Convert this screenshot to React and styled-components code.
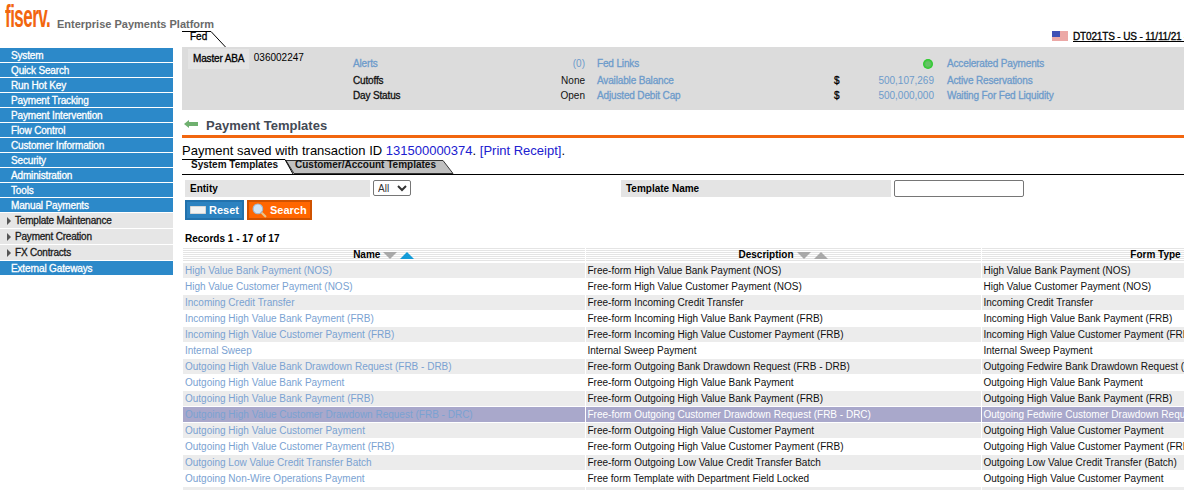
import * as React from 'react';
import styled, { createGlobalStyle } from 'styled-components';

const NAV_TOP = ['System', 'Quick Search', 'Run Hot Key', 'Payment Tracking', 'Payment Intervention', 'Flow Control', 'Customer Information', 'Security', 'Administration', 'Tools', 'Manual Payments'];
const NAV_SUB = ['Template Maintenance', 'Payment Creation', 'FX Contracts'];

const ROWS = [
  ['High Value Bank Payment (NOS)', 'Free-form High Value Bank Payment (NOS)', 'High Value Bank Payment (NOS)'],
  ['High Value Customer Payment (NOS)', 'Free-form High Value Customer Payment (NOS)', 'High Value Customer Payment (NOS)'],
  ['Incoming Credit Transfer', 'Free-form Incoming Credit Transfer', 'Incoming Credit Transfer'],
  ['Incoming High Value Bank Payment (FRB)', 'Free-form Incoming High Value Bank Payment (FRB)', 'Incoming High Value Bank Payment (FRB)'],
  ['Incoming High Value Customer Payment (FRB)', 'Free-form Incoming High Value Customer Payment (FRB)', 'Incoming High Value Customer Payment (FRB)'],
  ['Internal Sweep', 'Internal Sweep Payment', 'Internal Sweep Payment'],
  ['Outgoing High Value Bank Drawdown Request (FRB - DRB)', 'Free-form Outgoing Bank Drawdown Request (FRB - DRB)', 'Outgoing Fedwire Bank Drawdown Request (FRB - DRB)'],
  ['Outgoing High Value Bank Payment', 'Free-form Outgoing High Value Bank Payment', 'Outgoing High Value Bank Payment'],
  ['Outgoing High Value Bank Payment (FRB)', 'Free-form Outgoing High Value Bank Payment (FRB)', 'Outgoing High Value Bank Payment (FRB)'],
  ['Outgoing High Value Customer Drawdown Request (FRB - DRC)', 'Free-form Outgoing Customer Drawdown Request (FRB - DRC)', 'Outgoing Fedwire Customer Drawdown Request (FRB - DRC)'],
  ['Outgoing High Value Customer Payment', 'Free-form Outgoing High Value Customer Payment', 'Outgoing High Value Customer Payment'],
  ['Outgoing High Value Customer Payment (FRB)', 'Free-form Outgoing High Value Customer Payment (FRB)', 'Outgoing High Value Customer Payment (FRB)'],
  ['Outgoing Low Value Credit Transfer Batch', 'Free-form Outgoing Low Value Credit Transfer Batch', 'Outgoing Low Value Credit Transfer (Batch)'],
  ['Outgoing Non-Wire Operations Payment', 'Free form Template with Department Field Locked', 'Outgoing High Value Customer Payment'],
  ['', '', ''],
];
const SELECTED_ROW = 9;

const GlobalStyle = createGlobalStyle`
  html, body {
    margin: 0;
    padding: 0;
    background: #fff;
    overflow: hidden;
  }
  body {
    font-family: "Liberation Sans", Arial, sans-serif;
    font-size: 10px;
    color: #000;
  }
`;

const Page = styled.div`
  width: 1184px;
  height: 490px;
  overflow: hidden;
`;

const Header = styled.header`
  display: flex;
  align-items: flex-start;
  height: 31px;
  padding-left: 5px;
`;

const Logo = styled.span`
  display: block;
  flex: none;
  width: 52px;
  margin-top: 1px;
  font-size: 31px;
  line-height: 31px;
  font-weight: bold;
  letter-spacing: -1px;
  color: #f2660f;
  transform: scaleX(0.55);
  transform-origin: left center;
`;

const Product = styled.span`
  margin-top: 18px;
  font-size: 11px;
  line-height: 13px;
  font-weight: bold;
  color: #6a6a6a;
`;

const Body = styled.div`
  display: flex;
  align-items: flex-start;
`;

const Sidebar = styled.nav`
  flex: none;
  width: 173px;
  padding-top: 17px;
`;

const NavItem = styled.div`
  height: 14px;
  margin-bottom: 1px;
  padding-left: 11px;
  background: #2c89c9;
  color: #fff;
  line-height: 15px;
  letter-spacing: -0.15px;
  -webkit-text-stroke: 0.3px #fff;
`;

const SubItem = styled.div`
  display: flex;
  align-items: center;
  height: 15px;
  margin-bottom: 1px;
  padding-left: 7px;
  background: #e6e6e6;
  color: #1a1a1a;
  line-height: 17px;
  letter-spacing: -0.2px;
  -webkit-text-stroke: 0.3px #1a1a1a;
`;

const SubArrow = styled.i`
  width: 0;
  height: 0;
  margin-right: 4px;
  border-left: 4px solid #555;
  border-top: 4px solid transparent;
  border-bottom: 4px solid transparent;
`;

const Main = styled.main`
  flex: none;
  width: 1002px;
  margin-left: 9px;
`;

const TopBar = styled.div`
  display: flex;
  justify-content: space-between;
  height: 16px;
`;

const TabCorner = styled.svg`
  display: block;
  position: absolute;
  top: 0;
  right: 0;
`;

const FedTab = styled.div`
  position: relative;
  width: 44px;
  height: 16px;
  padding-left: 8px;
  font-size: 10px;
  line-height: 11px;
  box-sizing: border-box;
  -webkit-text-stroke: 0.3px #000;
`;

const Session = styled.div`
  display: flex;
  align-items: flex-start;
  width: 132px;
  white-space: nowrap;
  overflow: hidden;
  line-height: 11px;
  text-decoration: underline;
  letter-spacing: -0.15px;
  -webkit-text-stroke: 0.3px #000;
`;

const SessionText = styled.span`
  white-space: pre;
`;

const Clock = styled.span`
  color: #e08a20;
  -webkit-text-stroke: 0.3px #e08a20;
`;

const Flag = styled.svg`
  flex: none;
  margin-right: 5px;
`;

const Summary = styled.section`
  display: flex;
  height: 63px;
  background: #dcdcdc;
`;

const MasterBlock = styled.div`
  flex: none;
  display: flex;
  align-items: flex-start;
  width: 171px;
  padding: 2px 0 0 6px;
  box-sizing: border-box;
`;

const MasterLabel = styled.span`
  flex: none;
  width: 56px;
  padding-left: 5px;
  background: #e4e4e4;
  line-height: 20px;
  white-space: nowrap;
  letter-spacing: -0.15px;
  -webkit-text-stroke: 0.3px #000;
`;

const MasterValue = styled.span`
  margin-left: 2px;
  line-height: 18px;
`;

const Status = styled.div`
  display: grid;
  grid-template-columns: 150px 82px 249px 20px 80px 200px;
  grid-template-rows: 17px 15px 15px;
  padding-top: 9px;
  line-height: 15px;
  white-space: nowrap;
`;

const StatusLabel = styled.span`
  color: ${(p) => (p.$link ? '#6d9bcb' : '#111')};
  letter-spacing: -0.15px;
  -webkit-text-stroke: 0.3px ${(p) => (p.$link ? '#6d9bcb' : '#111')};
`;

const FedLink = styled.span`
  padding-left: 12px;
  color: #6d9bcb;
  letter-spacing: -0.15px;
  -webkit-text-stroke: 0.3px #6d9bcb;
`;

const StatusValue = styled.span`
  text-align: right;
  color: ${(p) => (p.$link ? '#6d9bcb' : '#111')};
`;

const Currency = styled.span`
  -webkit-text-stroke: 0.3px #000;
`;

const AccelCell = styled.span`
  grid-column: span 2;
  display: flex;
  justify-content: flex-end;
  align-items: flex-start;
`;

const GreenDot = styled.i`
  width: 10px;
  height: 10px;
  margin: 3px 1px 0 0;
  border-radius: 50%;
  background: radial-gradient(circle, #66c266 30%, #22cc22 70%, #5fd85f 100%);
`;

const SideLink = styled.span`
  padding-left: 13px;
  color: #6d9bcb;
  letter-spacing: -0.15px;
  -webkit-text-stroke: 0.3px #6d9bcb;
`;

const TitleRow = styled.div`
  display: flex;
  align-items: center;
  box-sizing: border-box;
  height: 28px;
  padding-left: 2px;
  border-bottom: 3px solid #f2660f;
`;

const BackArrow = styled.svg`
  margin: 2px 8px 0 0;
`;

const Title = styled.h1`
  margin: 6px 0 0;
  font-size: 13px;
  line-height: 19px;
  font-weight: bold;
  color: #434a55;
`;

const Message = styled.p`
  margin: 0;
  height: 21px;
  font-size: 13px;
  line-height: 26px;
  white-space: nowrap;
`;

const Blue = styled.span`
  color: #2020d0;
`;

const Tabs = styled.div`
  position: relative;
  display: flex;
  height: 15px;
  border-bottom: 1px solid #000;
`;

const TabShape = styled.svg`
  position: absolute;
  top: 0;
  left: 0;
`;

const TabLabel = styled.span`
  position: relative;
  height: 14px;
  font-weight: bold;
  line-height: 12px;
  color: #111;
  width: ${(p) => p.$w}px;
  padding-left: ${(p) => p.$pad}px;
  box-sizing: border-box;
`;

const Filters = styled.div`
  display: flex;
  align-items: flex-start;
  height: 20px;
  margin-top: 5px;
  padding-left: 3px;
`;

const FilterLabel = styled.label`
  flex: none;
  box-sizing: border-box;
  width: ${(p) => p.$w}px;
  height: 17px;
  padding-left: 5px;
  background: #e4e4e4;
  font-weight: bold;
  line-height: 17px;
`;

const Select = styled.select`
  width: 38px;
  height: 16px;
  margin: 0 210px 0 3px;
  padding: 0;
  border: 1px solid #767676;
  border-radius: 2px;
  background: #fff;
  font-family: "Liberation Sans", Arial, sans-serif;
  font-size: 10px;
  color: #333;
`;

const TextInput = styled.input`
  width: 130px;
  height: 17px;
  margin-left: 3px;
  padding: 0;
  box-sizing: border-box;
  border: 1px solid #767676;
  border-radius: 2px;
`;

const Buttons = styled.div`
  display: flex;
  gap: 3px;
  height: 20px;
  padding-left: 3px;
`;

const Button = styled.button`
  display: flex;
  align-items: center;
  gap: 3px;
  width: ${(p) => p.$w}px;
  height: 20px;
  margin: 0;
  padding: 0 0 0 3px;
  box-sizing: border-box;
  border: 2px solid ${(p) => (p.$orange ? '#cf5200' : '#2272ad')};
  background: ${(p) => (p.$orange ? '#ff6600' : '#2c82c0')};
  color: #fff;
  font-family: "Liberation Sans", Arial, sans-serif;
  font-size: 11px;
  font-weight: bold;
`;

const Records = styled.div`
  height: 28px;
  padding-left: 3px;
  font-weight: bold;
  line-height: 38px;
`;

const Table = styled.table`
  width: 1181px;
  margin-left: 1px;
  table-layout: fixed;
  border-collapse: collapse;
`;

const HeadCell = styled.th`
  height: 14px;
  padding: 0;
  border-right: 1px solid #fff;
  border-bottom: 1px solid #fff;
  background: repeating-linear-gradient(#e4e4e4 0 1px, #fff 1px 2px);
  text-align: center;
  font-size: 10px;
  line-height: 14px;
  white-space: nowrap;
`;

const SortArrow = styled.i`
  display: inline-block;
  width: 0;
  height: 0;
  margin-left: 3px;
  vertical-align: -1px;
  border-left: 7px solid transparent;
  border-right: 7px solid transparent;
  ${(p) => (p.$up
    ? `border-bottom: 7px solid ${p.$active ? '#129bd8' : '#a8a8a8'};`
    : 'border-top: 7px solid #a8a8a8;')}
`;

const Cell = styled.td`
  height: 14px;
  padding: 1px 0 0 2px;
  border-right: 1px solid #fff;
  border-bottom: 1px solid #fff;
  overflow: hidden;
  white-space: nowrap;
  font-size: 10px;
  line-height: 14px;
  background: ${(p) => (p.$selected ? '#a9a8cb' : p.$striped ? '#ececec' : '#fff')};
  color: ${(p) => (p.$link ? '#7aa2d2' : p.$selected ? '#fff' : '#111')};
`;

const App = () => (
  <Page>
    <GlobalStyle />
    <Header>
      <Logo>fiserv.</Logo>
      <Product>Enterprise Payments Platform</Product>
    </Header>
    <Body>
      <Sidebar>
        {NAV_TOP.map((n) => <NavItem key={n}>{n}</NavItem>)}
        {NAV_SUB.map((n) => <SubItem key={n}><SubArrow />{n}</SubItem>)}
        <NavItem>External Gateways</NavItem>
      </Sidebar>
      <Main>
        <TopBar>
          <FedTab>
            Fed
            <TabCorner width="44" height="16" viewBox="0 0 44 16">
              <path d="M0 .5H29L43.5 16" fill="none" stroke="#000" />
            </TabCorner>
          </FedTab>
          <Session>
            <Flag width="16" height="10" viewBox="0 0 16 10">
              <rect width="16" height="10" fill="#fff" />
              <path d="M0 1h16M0 3h16M0 5h16M0 7h16M0 9h16" stroke="#d9534f" />
              <rect width="8" height="6" fill="#3f51b5" />
            </Flag>
            <SessionText>DT021TS - US - 11/11/21 - <Clock>13</Clock></SessionText>
          </Session>
        </TopBar>
        <Summary>
          <MasterBlock>
            <MasterLabel>Master ABA</MasterLabel>
            <MasterValue>&nbsp;036002247</MasterValue>
          </MasterBlock>
          <Status>
            <StatusLabel $link>Alerts</StatusLabel>
            <StatusValue $link>(0)</StatusValue>
            <FedLink>Fed Links</FedLink>
            <AccelCell><GreenDot /></AccelCell>
            <SideLink>Accelerated Payments</SideLink>

            <StatusLabel>Cutoffs</StatusLabel>
            <StatusValue>None</StatusValue>
            <FedLink>Available Balance</FedLink>
            <Currency>$</Currency>
            <StatusValue $link>500,107,269</StatusValue>
            <SideLink>Active Reservations</SideLink>

            <StatusLabel>Day Status</StatusLabel>
            <StatusValue>Open</StatusValue>
            <FedLink>Adjusted Debit Cap</FedLink>
            <Currency>$</Currency>
            <StatusValue $link>500,000,000</StatusValue>
            <SideLink>Waiting For Fed Liquidity</SideLink>
          </Status>
        </Summary>
        <TitleRow>
          <BackArrow width="14" height="8" viewBox="0 0 14 8">
            <path d="M0 4L5 0V2H14V6H5V8Z" fill="#6fb06f" />
          </BackArrow>
          <Title>Payment Templates</Title>
        </TitleRow>
        <Message>
          Payment saved with transaction ID <Blue>131500000374</Blue>. <Blue>[Print Receipt]</Blue>.
        </Message>
        <Tabs>
          <TabShape width="280" height="15" viewBox="0 0 280 15">
            <path d="M104 1.5H261L271 14.5H112Z" fill="#c0c0c0" stroke="#333" />
            <path d="M0 .5H103L111 15" fill="none" stroke="#000" />
          </TabShape>
          <TabLabel $w={102} $pad={9}>System Templates</TabLabel>
          <TabLabel $w={160} $pad={11}>Customer/Account Templates</TabLabel>
        </Tabs>
        <Filters>
          <FilterLabel $w={185}>Entity</FilterLabel>
          <Select defaultValue="All"><option>All</option></Select>
          <FilterLabel $w={270}>Template Name</FilterLabel>
          <TextInput />
        </Filters>
        <Buttons>
          <Button $w={59}>
            <svg width="16" height="8" viewBox="0 0 16 8"><rect width="16" height="8" fill="#f2f2f2" stroke="#bbb" /></svg>
            Reset
          </Button>
          <Button $w={65} $orange>
            <svg width="15" height="15" viewBox="0 0 14 14">
              <circle cx="5.5" cy="5.5" r="4.5" fill="#cfe3f5" stroke="#9fb8d0" />
              <path d="M9 9L13 13" stroke="#e8c48a" strokeWidth="2" />
            </svg>
            Search
          </Button>
        </Buttons>
        <Records>Records 1 - 17 of 17</Records>
        <Table>
          <colgroup>
            <col style={{ width: 402 }} />
            <col style={{ width: 396 }} />
            <col style={{ width: 383 }} />
          </colgroup>
          <thead>
            <tr>
              <HeadCell>Name<SortArrow /><SortArrow $up $active /></HeadCell>
              <HeadCell>Description<SortArrow /><SortArrow $up /></HeadCell>
              <HeadCell>Form Type<SortArrow /><SortArrow $up /></HeadCell>
            </tr>
          </thead>
          <tbody>
            {ROWS.map((row, i) => (
              <tr key={i}>
                {row.map((text, c) => (
                  <Cell key={c} $link={c === 0} $striped={i % 2 === 0} $selected={i === SELECTED_ROW}>{text}</Cell>
                ))}
              </tr>
            ))}
          </tbody>
        </Table>
      </Main>
    </Body>
  </Page>
);

export default App;
